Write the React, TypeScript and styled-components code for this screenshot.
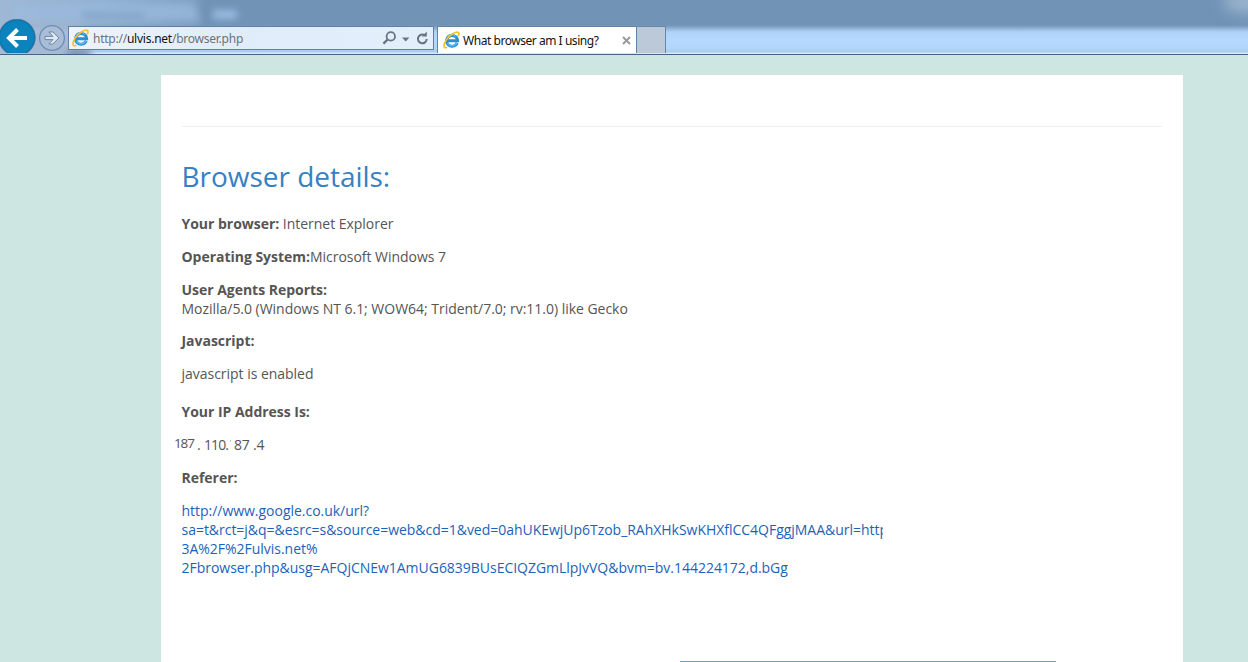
import React from "react";
import styled, { createGlobalStyle } from "styled-components";

const GlobalStyle = createGlobalStyle`
  html, body { margin: 0; padding: 0; }
  body { background: #cee6e2; font-family: "Open Sans", "Noto Sans", sans-serif; overflow: hidden; }
`;

const Window = styled.div`
  width: 1248px;
  height: 662px;
  overflow: hidden;
  display: flex;
  flex-direction: column;
`;

const Chrome = styled.header`
  position: relative;
  flex: none;
  box-sizing: border-box;
  height: 55px;
  padding-top: 19px;
  border-bottom: 1px solid #466284;
  overflow: hidden;
  display: flex;
  align-items: flex-start;
  background: linear-gradient(#7093b6 0, #7093b6 25px, #8dadcf 28px, #aed2f9 32px, #b6d9fe 40px, #b1d4fa 49px, #a9caf0 52px, #d8eaf9 53px, #d8eaf9 54px);
`;

const Glass = styled.svg`
  position: absolute;
  left: 0;
  top: 0;
`;

const BackButton = styled.svg`
  position: relative;
  flex: none;
  width: 37px;
  height: 34px;
`;

const ForwardButton = styled.svg`
  position: relative;
  flex: none;
  width: 28px;
  height: 28px;
  margin: 5px 3px 0 1px;
`;

const AddressBar = styled.div`
  position: relative;
  flex: none;
  box-sizing: border-box;
  width: 366px;
  height: 24px;
  margin: 7px 3px 0 -1px;
  padding: 0 4px 0 3px;
  border: 1px solid #5f7fa5;
  background: linear-gradient(90deg, #eef3f9, #e0ecfa 50%, #e4effc);
  display: flex;
  align-items: center;
`;

const Address = styled.span`
  flex: 1;
  padding: 2px 0 0 4px;
  font: 12px/20px "Noto Sans", "Open Sans", sans-serif;
  letter-spacing: -0.24px;
  color: #6e7278;
  white-space: nowrap;
  b { font-weight: 400; color: #111; }
`;

const Tab = styled.div`
  position: relative;
  flex: none;
  box-sizing: border-box;
  width: 200px;
  height: 27px;
  margin-top: 7px;
  padding: 0 5px;
  border: 1px solid #6482a4;
  border-bottom: 0;
  background: #fff;
  display: flex;
  align-items: center;
`;

const TabTitle = styled.span`
  flex: 1;
  padding: 2px 0 0 3px;
  font: 12px/20px "Noto Sans", "Open Sans", sans-serif;
  letter-spacing: -0.46px;
  color: #111;
  white-space: nowrap;
`;

const NewTab = styled.div`
  position: relative;
  flex: none;
  box-sizing: border-box;
  width: 29px;
  height: 27px;
  margin-top: 7px;
  border: 1px solid #6886a8;
  border-width: 1px 1px 0 0;
  background: #bcc9d8;
`;

const Card = styled.main`
  flex: none;
  box-sizing: border-box;
  width: 1022px;
  height: 587px;
  margin: 20px 0 0 161px;
  padding: 51px 21px 0 20.5px;
  background: #fff;
  color: #555;
  font-size: 14px;
  line-height: 19px;
  letter-spacing: -0.026px;
  display: flex;
  flex-direction: column;
`;

const Rule = styled.hr`
  width: 980px;
  height: 1px;
  margin: 0 0 0 0.5px;
  border: 0;
  background: #eee;
`;

const Title = styled.h1`
  margin: 29px 0 18px;
  font-size: 28px;
  line-height: 40px;
  font-weight: 400;
  color: #3680c4;
`;

const Row = styled.p<{ $gap?: number }>`
  margin: 0 0 ${(p) => p.$gap ?? 14}px;
  white-space: nowrap;
`;

const IpRow = styled(Row)`
  display: flex;
  margin-left: -7.5px;
`;

const IpPart = styled.span<{ $width: number; $raise?: boolean; $spacing?: number }>`
  width: ${(p) => p.$width}px;
  font-size: ${(p) => (p.$raise ? 13.5 : 14)}px;
  letter-spacing: ${(p) => p.$spacing ?? -0.3}px;
  line-height: ${(p) => (p.$raise ? 17 : 19)}px;
`;

const Speck = styled.span`
  width: 1px;
  height: 2px;
  margin: 5px 3px 0 -3px;
  background: #c4c4c4;
`;

const Referer = styled.a`
  display: block;
  width: 701px;
  overflow: hidden;
  color: #1c62b9;
  white-space: nowrap;
`;

const BottomLine = styled.div`
  width: 376px;
  height: 1px;
  margin: auto 0 0 498.5px;
  background: #58aeb8;
`;

const IeLogo = () => (
  <svg width="17" height="18" viewBox="0 0 17 18" fill="none">
    <path d="M14.2 11.9A5.5 5.4 0 1 1 14.6 9.7H5.2" stroke="#2b8fd4" strokeWidth="3" />
    <path d="M13.9 12A5.4 5.3 0 0 1 4.4 12" stroke="#62bdeb" strokeWidth="1.3" />
    <path d="M4 5.2A6 6 0 0 1 12.9 5.7" stroke="#68bfeb" strokeWidth="1" />
    <path d="M3.6 16.5C.3 17.8.2 13.4 3.4 8.8 7 3.5 13.6-.1 15.5 1.7c.7.7.5 2-.1 3" stroke="#f0c529" strokeWidth="1.7" strokeLinecap="round" />
  </svg>
);

const AddressTools = () => (
  <svg width="50" height="20" viewBox="0 0 50 20" fill="none" stroke="#6b747e">
    <circle cx="11.8" cy="8.4" r="4.2" strokeWidth="1.8" />
    <path d="M8.7 11.5 4.4 15.6" strokeWidth="2.4" />
    <path d="M23 9.6h7.4l-3.7 3.8z" fill="#6b747e" stroke="none" />
    <path d="M45.6 7.2A4.4 4.4 0 1 0 47.7 11" strokeWidth="2" />
    <path d="M47.8 3.4v5.1h-5z" fill="#6b747e" stroke="none" />
  </svg>
);

export default function App() {
  return (
    <Window>
      <GlobalStyle />
      <Chrome>
        <Glass width="1248" height="54" viewBox="0 0 1248 54">
          <defs>
            <filter id="soft" x="-30%" y="-80%" width="160%" height="260%"><feGaussianBlur stdDeviation="7" /></filter>
            <filter id="fine" x="-30%" y="-80%" width="160%" height="260%"><feGaussianBlur stdDeviation="3.5" /></filter>
            <linearGradient id="fade">
              <stop offset="0" stopColor="#a1b9d5" />
              <stop offset=".6" stopColor="#91afd0" />
              <stop offset="1" stopColor="#7f9fc3" />
            </linearGradient>
          </defs>
          <rect x="-20" y="-10" width="220" height="38" fill="url(#fade)" filter="url(#fine)" />
          <path d="M16 4H192l8 16H10z" fill="#9bbbe0" opacity=".7" filter="url(#fine)" />
          <rect x="82" y="12" width="62" height="7" fill="#7e9fc4" opacity=".7" filter="url(#fine)" />
          <rect x="213" y="10" width="24" height="9" fill="#9abbe0" filter="url(#fine)" />
          <rect x="-20" y="24" width="100" height="40" fill="#a5b9d4" filter="url(#soft)" />
          <ellipse cx="79" cy="54" rx="14" ry="5" fill="#788fae" filter="url(#fine)" />
          <ellipse cx="1250" cy="2" rx="27" ry="11" fill="#9bb5ce" filter="url(#soft)" />
        </Glass>
        <BackButton viewBox="0 19 37 34">
          <circle cx="17" cy="37.5" r="18.3" fill="#0878b2" stroke="#4a7295" strokeWidth=".8" />
          <circle cx="17" cy="37.5" r="16.8" fill="#0b83bd" />
          <path d="M27 38H9.5M17.5 29.5 9 38l8.5 8.5" fill="none" stroke="#fff" strokeWidth="4" />
        </BackButton>
        <ForwardButton viewBox="38 24 28 28">
          <circle cx="52" cy="38" r="12.4" fill="#a9bdd7" stroke="#6e8db3" strokeWidth="1.3" />
          <path d="M45 36.4h8l-4.2-4.4h4l6.2 6-6.2 6h-4l4.2-4.4h-8z" fill="#dfe7f2" stroke="#667f9f" strokeWidth=".9" />
        </ForwardButton>
        <AddressBar>
          <IeLogo />
          <Address>http://<b>ulvis.net</b>/browser.php</Address>
          <AddressTools />
        </AddressBar>
        <Tab>
          <IeLogo />
          <TabTitle>What browser am I using?</TabTitle>
          <svg width="9" height="9" viewBox="0 0 9 9"><path d="m1 1 7 7M8 1 1 8" stroke="#9a9a9a" strokeWidth="2" /></svg>
        </Tab>
        <NewTab />
      </Chrome>
      <Card>
        <Rule />
        <Title>Browser details:</Title>
        <Row><b>Your browser:</b> Internet Explorer</Row>
        <Row><b>Operating System:</b>Microsoft Windows 7</Row>
        <Row $gap={13}><b>User Agents Reports:</b><br />Mozilla/5.0 (Windows NT 6.1; WOW64; Trident/7.0; rv:11.0) like Gecko</Row>
        <Row><b>Javascript:</b></Row>
        <Row $gap={19}>javascript is enabled</Row>
        <Row><b>Your IP Address Is:</b></Row>
        <IpRow>
          <IpPart $width={23} $raise $spacing={-1.1}>187</IpPart>
          <IpPart $width={7}>.</IpPart>
          <IpPart $width={29} $spacing={-0.9}>110.</IpPart>
          <Speck />
          <IpPart $width={19}>87</IpPart>
          <IpPart $width={20}>.4</IpPart>
        </IpRow>
        <Row><b>Referer:</b></Row>
        <Referer>
          http://www.google.co.uk/url?<br />
          sa=t&amp;rct=j&amp;q=&amp;esrc=s&amp;source=web&amp;cd=1&amp;ved=0ahUKEwjUp6Tzob_RAhXHkSwKHXflCC4QFggjMAA&amp;url=http%<br />
          3A%2F%2Fulvis.net%<br />
          2Fbrowser.php&amp;usg=AFQjCNEw1AmUG6839BUsECIQZGmLlpJvVQ&amp;bvm=bv.144224172,d.bGg
        </Referer>
        <BottomLine />
      </Card>
    </Window>
  );
}
